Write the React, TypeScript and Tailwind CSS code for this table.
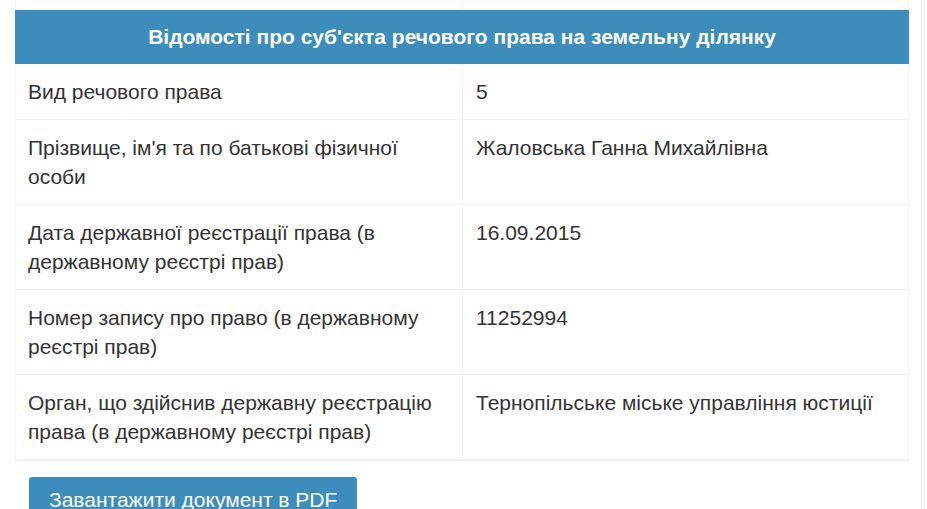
import React from 'react';

const rows = [
  { label: 'Вид речового права', value: '5' },
  { label: "Прізвище, ім'я та по батькові фізичної особи", value: 'Жаловська Ганна Михайлівна' },
  { label: 'Дата державної реєстрації права (в державному реєстрі прав)', value: '16.09.2015' },
  { label: 'Номер запису про право (в державному реєстрі прав)', value: '11252994' },
  { label: 'Орган, що здійснив державну реєстрацію права (в державному реєстрі прав)', value: 'Тернопільське міське управління юстиції' },
];

export default function App() {
  return (
    <div className="flex h-[509px] w-[927px] overflow-hidden bg-white font-['Liberation_Sans',Arial,sans-serif] text-[21px] text-[#333]">
      <div className="w-[922px] shrink-0 border-r border-[#eeeeee] pl-[15px]">
        <div className="w-[894px]">
          {/* tail of the previous table */}
          <div className="grid h-[10px] grid-cols-[447px_1fr] border-x border-[#f4f4f4]">
            <div className="border-r border-[#f4f4f4]" />
            <div />
          </div>

          <div className="flex h-[54px] items-center justify-center bg-[#3c8dbc] font-bold text-white">
            Відомості про суб'єкта речового права на земельну ділянку
          </div>

          <div className="border-x border-[#f4f4f4] shadow-[0_1px_1px_rgba(0,0,0,0.08)]">
            {rows.map((row, idx) => (
              <div key={idx} className="grid grid-cols-[447px_1fr] border-b border-[#f4f4f4] leading-[29px]">
                <div className="border-r border-[#f4f4f4] px-[12px] pt-[13px] pb-[13px]">{row.label}</div>
                <div className="px-[13px] pt-[13px] pb-[13px]">{row.value}</div>
              </div>
            ))}
          </div>

          <button className="mt-[17px] ml-[14px] rounded-[3px] bg-[#3c8dbc] px-[20px] pt-[8px] pb-[10px] leading-[30px] text-white">
            Завантажити документ в PDF
          </button>
        </div>
      </div>
      <div className="ml-[2px] w-px bg-[#f0f0f0]" />
    </div>
  );
}
